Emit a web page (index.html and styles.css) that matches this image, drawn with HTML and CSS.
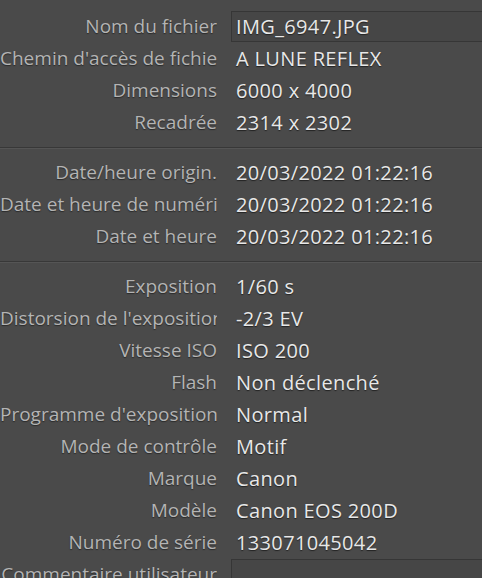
FILE: index.html
```html
<!DOCTYPE html>
<html lang="fr">
<head>
<meta charset="utf-8">
<link rel="stylesheet" href="styles.css">
</head>
<body>
<div class="panel">
  <div class="section">
    <div class="row"><div class="label">Nom du fichier</div><div class="value"><div class="field">IMG_6947.JPG</div></div></div>
    <div class="row"><div class="label">Chemin d'accès de fichier</div><div class="value">A LUNE REFLEX</div></div>
    <div class="row"><div class="label">Dimensions</div><div class="value">6000 x 4000</div></div>
    <div class="row"><div class="label">Recadrée</div><div class="value">2314 x 2302</div></div>
  </div>
  <div class="sep"></div>
  <div class="section">
    <div class="row"><div class="label">Date/heure origin.</div><div class="value">20/03/2022 01:22:16</div></div>
    <div class="row"><div class="label">Date et heure de numérisation</div><div class="value">20/03/2022 01:22:16</div></div>
    <div class="row"><div class="label">Date et heure</div><div class="value">20/03/2022 01:22:16</div></div>
  </div>
  <div class="sep"></div>
  <div class="section">
    <div class="row"><div class="label">Exposition</div><div class="value">1/60 s</div></div>
    <div class="row"><div class="label">Distorsion de l'exposition</div><div class="value">-2/3 EV</div></div>
    <div class="row"><div class="label">Vitesse ISO</div><div class="value">ISO 200</div></div>
    <div class="row"><div class="label">Flash</div><div class="value">Non déclenché</div></div>
    <div class="row"><div class="label">Programme d'exposition</div><div class="value">Normal</div></div>
    <div class="row"><div class="label">Mode de contrôle</div><div class="value">Motif</div></div>
    <div class="row"><div class="label">Marque</div><div class="value">Canon</div></div>
    <div class="row"><div class="label">Modèle</div><div class="value">Canon EOS 200D</div></div>
    <div class="row"><div class="label">Numéro de série</div><div class="value">133071045042</div></div>
    <div class="row"><div class="label">Commentaire utilisateur</div><div class="value"><div class="field"></div></div></div>
  </div>
</div>
</body>
</html>
```

FILE: styles.css
```css
html, body {
  margin: 0;
  padding: 0;
  background: #4a4a4a;
  overflow: hidden;
}
.panel {
  width: 482px;
  height: 578px;
  overflow: hidden;
  padding-top: 10px;
  box-sizing: border-box;
  font-family: "Open Sans", "Noto Sans", sans-serif;
}
.row {
  display: grid;
  grid-template-columns: 217px 1fr;
  column-gap: 19px;
  height: 32px;
  align-items: center;
}
.label {
  color: #b4b4b4;
  font-size: 19px;
  text-align: right;
  white-space: nowrap;
  overflow: hidden;
  text-shadow: 0 1px 1px #2a2a2a;
}
.value {
  color: #e8e8e8;
  font-size: 20px;
  letter-spacing: 0.35px;
  white-space: nowrap;
  text-shadow: 0 1px 1px #222;
  min-width: 0;
}
.field {
  margin-left: -5px;
  margin-right: -10px;
  padding-left: 4px;
  height: 29px;
  line-height: 29px;
  border: 1px solid #363636;
  background: #464646;
}
.sep {
  margin: 9px 0 7px;
  border-top: 1px solid #383838;
  border-bottom: 1px solid #555;
}
```
